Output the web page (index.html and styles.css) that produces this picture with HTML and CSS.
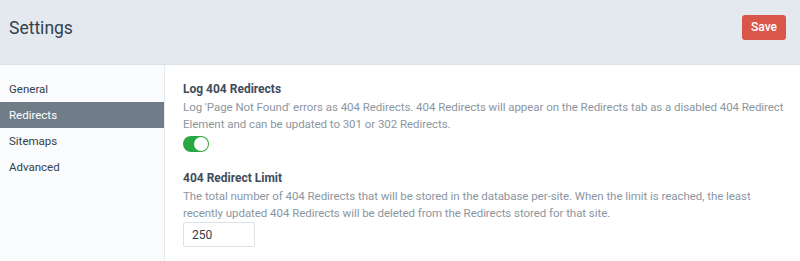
FILE: index.html
```html
<!DOCTYPE html>
<html lang="en">
<head>
    <meta charset="UTF-8">
    <meta name="viewport" content="width=device-width, initial-scale=1.0">
    <title>Settings</title>
    <link rel="stylesheet" href="styles.css">
</head>
<body>
<div class="header">
    <h1>Settings</h1>
    <button class="save-btn" type="button">Save</button>
</div>

<div class="container">
    <div class="side-panel">
        <a href="#">General</a>
        <a href="#" class="active">Redirects</a>
        <a href="#">Sitemaps</a>
        <a href="#">Advanced</a>
    </div>

    <div class="main-content">
        <div class="field">
            <h3>Log 404 Redirects</h3>
            <p>Log 'Page Not Found' errors as 404 Redirects. 404 Redirects will appear on the Redirects tab as a disabled 404 Redirect Element and can be updated to 301 or 302 Redirects.</p>
            <label class="toggle">
                <input type="checkbox" checked>
                <span class="knob"></span>
            </label>
        </div>

        <div class="field">
            <h3>404 Redirect Limit</h3>
            <p>The total number of 404 Redirects that will be stored in the database per-site. When the limit is reached, the least recently updated 404 Redirects will be deleted from the Redirects stored for that site.</p>
            <input type="text" class="text-input" value="250">
        </div>
    </div>
</div>
</body>
</html>
```

FILE: styles.css
```css
body {
    font-family: "Roboto", "Liberation Sans", sans-serif;
    margin: 0;
    padding: 0;
    background-color: #fff;
    color: #3f4c5a;
}

/* Header */
.header {
    display: flex;
    align-items: center;
    justify-content: space-between;
    height: 65px;
    padding: 0 14px 0 9px;
    background-color: #e4e9ef;
    border-bottom: 1px solid #dbe1e8;
    box-sizing: border-box;
}

.header h1 {
    margin: 0;
    font-size: 17.5px;
    font-weight: 400;
    color: #33404d;
    padding-bottom: 8px;
}

.save-btn {
    background-color: #d9574a;
    color: white;
    border: none;
    border-radius: 3px;
    padding: 0 9px;
    height: 25px;
    font-size: 12px;
    font-weight: 500;
    font-family: inherit;
    margin-bottom: 10px;
}

.container {
    display: flex;
}

/* Side Panel */
.side-panel {
    width: 164px;
    background-color: #fafbfc;
    border-right: 1px solid #e6eaee;
    padding-top: 11px;
    height: 196px;
    display: flex;
    flex-direction: column;
}

.side-panel a {
    color: #33404d;
    text-decoration: none;
    padding: 0 9px;
    height: 26px;
    line-height: 26px;
    font-size: 11.5px;
}

.side-panel a.active {
    background-color: #717c89;
    color: white;
}

/* Main Content */
.main-content {
    flex: 1;
    padding: 14px 10px 0 18px;
}

.field {
    margin-bottom: 16px;
}

.field h3 {
    margin: 0;
    font-size: 12px;
    font-weight: 700;
    line-height: 20px;
    color: #3f4c5a;
}

.field p {
    margin: 0;
    font-size: 11.5px;
    letter-spacing: -0.05px;
    line-height: 17px;
    color: #8c96a1;
}

.toggle {
    display: block;
    position: relative;
    width: 26px;
    height: 16px;
    margin-top: 3px;
}

.toggle input {
    display: none;
}

.toggle .knob {
    display: block;
    width: 26px;
    height: 16px;
    border-radius: 8px;
    background-color: #28a745;
}

.toggle .knob::after {
    content: "";
    position: absolute;
    top: 1px;
    right: 1px;
    width: 14px;
    height: 14px;
    border-radius: 50%;
    background-color: white;
}

.text-input {
    width: 72px;
    height: 25px;
    padding: 0 8px;
    font-size: 12px;
    font-family: inherit;
    color: #33404d;
    border: 1px solid #dde2e7;
    border-radius: 2px;
    box-sizing: border-box;
}
```
